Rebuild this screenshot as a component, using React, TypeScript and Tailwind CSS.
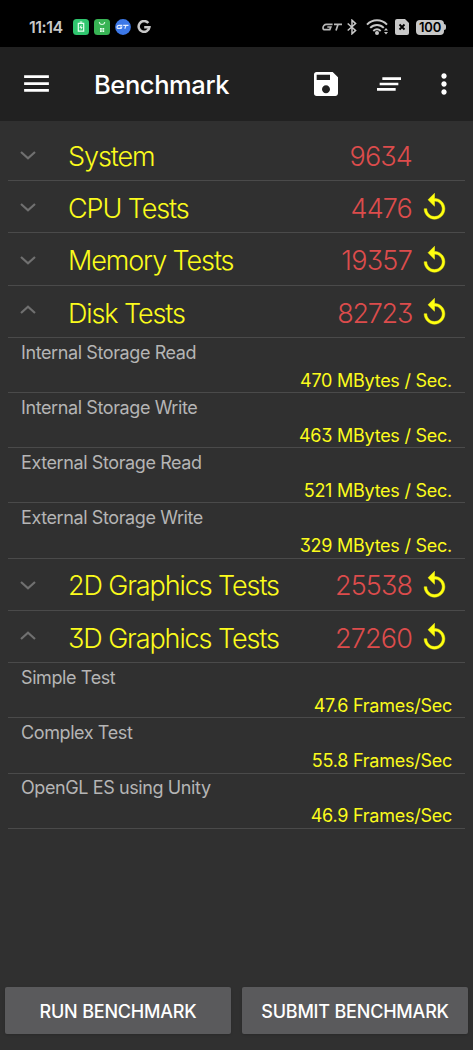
import React from "react";
import { MdClearAll, MdMenu, MdMoreVert, MdSave } from "react-icons/md";

const groups = [
  { name: "System", score: "9634", retry: false, open: false, tracking: -0.85, items: [] },
  { name: "CPU Tests", score: "4476", retry: true, open: false, tracking: -0.85, items: [] },
  { name: "Memory Tests", score: "19357", retry: true, open: false, tracking: -0.75, items: [] },
  {
    name: "Disk Tests",
    score: "82723",
    retry: true,
    open: true,
    tracking: -1.3,
    items: [
      { label: "Internal Storage Read", value: "470 MBytes / Sec." },
      { label: "Internal Storage Write", value: "463 MBytes / Sec." },
      { label: "External Storage Read", value: "521 MBytes / Sec." },
      { label: "External Storage Write", value: "329 MBytes / Sec." },
    ],
  },
  { name: "2D Graphics Tests", score: "25538", retry: true, open: false, tracking: -0.9, items: [] },
  {
    name: "3D Graphics Tests",
    score: "27260",
    retry: true,
    open: true,
    tracking: -0.85,
    items: [
      { label: "Simple Test", value: "47.6 Frames/Sec" },
      { label: "Complex Test", value: "55.8 Frames/Sec" },
      { label: "OpenGL ES using Unity", value: "46.9 Frames/Sec" },
    ],
  },
];

const Chevron = ({ open }: { open: boolean }) => (
  <svg
    viewBox="0 0 16 9"
    className={open ? "w-4 h-[9px] mb-[3px]" : "w-4 h-[9px] mt-[2px] rotate-180"}
    fill="none"
    stroke="#707070"
    strokeWidth="2.2"
  >
    <path d="M1 8 8 1.8 15 8" />
  </svg>
);

const Replay = () => (
  <svg viewBox="0 0 24 24" className="w-[31px] h-[31px]" fill="#ffff10" stroke="#ffff10" strokeWidth="0.4">
    <path d="M12 5V1L7 6l5 5V7c3.310 0 6 2.690 6 6s-2.690 6-6 6-6-2.690-6-6H4c0 4.420 3.580 8 8 8s8-3.580 8-8-3.580-8-8-8z" />
  </svg>
);

const StatusBar = () => (
  <div className="h-[47px] bg-black flex items-center pt-[7px] pl-[29px] pr-[27px] text-[#c8c8c8]">
    <span className="w-[44px] text-[16px] font-semibold tracking-[-0.5px] whitespace-nowrap">11:14</span>
    {/* Battery app */}
    <svg viewBox="0 0 16 16" className="w-4 h-4">
      <rect width="16" height="16" rx="3.5" fill="#2fc56e" />
      <path d="M6.7 3h2.6M5.3 4.4h5.4v7.8H5.3z" fill="none" stroke="#e9fff1" strokeWidth="1.2" />
      <path d="M8.5 5.6 6.4 8.8h1.4v2.2l1.9-3.1H8.3z" fill="#e9fff1" />
    </svg>
    {/* Shopping app */}
    <svg viewBox="0 0 16 16" className="w-4 h-4 ml-[5px]">
      <rect width="16" height="16" rx="3.5" fill="#38b354" />
      <path d="M5.3 3c.2 3.4 5.2 3.4 5.4 0" fill="none" stroke="#d9f7df" strokeWidth="1.1" />
      <path d="M6 9h1.8v1.8H6zM8.4 9h1.8v1.8H8.4zM6 11.3h1.8V13H6zM8.4 11.3h1.8V13H8.4z" fill="#e9fff1" />
    </svg>
    {/* GT mode */}
    <svg viewBox="0 0 16 16" className="w-4 h-4 ml-[5px]">
      <circle cx="8" cy="8" r="7.9" fill="#3c78e8" />
      <path
        d="M7.3 6.4H4.2C2.9 6.4 2 7.5 2 8.4c0 .7.6 1 1.4 1h2.8L6.8 8H5M8.2 6.4h5.3M11 6.4 9.8 9.7"
        fill="none"
        stroke="#e6efff"
        strokeWidth="1.1"
      />
    </svg>
    {/* Google */}
    <svg viewBox="0 0 14 14" className="w-[14px] h-[14px] ml-[6px]" fill="none" stroke="#c8c8c8" strokeWidth="2.5">
      <path d="M11.3 3.1A5.4 5.4 0 1 0 12.4 7.2H7.2" />
    </svg>
    <div className="ml-auto flex items-center">
      <svg viewBox="0 0 20 8" className="w-5 h-2 mr-[5px]" fill="none" stroke="#b8b8b8" strokeWidth="1.7">
        <path d="M10.6 1.4H4.4C2.4 1.4 1 3.2 1 4.9c0 1.1.8 1.7 2 1.7h4.8l1-2.6H5.3M12 1.4h8M16 1.4 14 7.4" />
      </svg>
      <svg viewBox="0 0 10 16" className="w-[10px] h-4" fill="none" stroke="#c8c8c8" strokeWidth="1.5">
        <path d="M.7 4.5 8.6 11.4 5 14.8V1.2L8.6 4.6.7 11.5" />
      </svg>
      <svg viewBox="0 0 23 16" className="w-[23px] h-4 ml-[9px]" fill="none" stroke="#c8c8c8" strokeWidth="2">
        <path d="M1 5.6C6.6-.1 15.4-.1 21 5.6M4.2 8.9c3.8-3.8 9.8-3.8 13.6 0M7.3 11.9c2.2-2 5.2-2 7.4 0" />
        <circle cx="11" cy="14" r="2" fill="#c8c8c8" stroke="none" />
        <path d="m18 11.600 2-2.600 2 2.600zM18 12.900l2 2.600 2-2.600z" fill="#c8c8c8" stroke="none" />
      </svg>
      <svg viewBox="0 0 14 16" className="w-[14px] h-4 ml-[6px]">
        <path d="M2 0h8l4 4v10a2 2 0 0 1-2 2H2a2 2 0 0 1-2-2V2a2 2 0 0 1 2-2z" fill="#c8c8c8" />
        <path d="m4.5 5.5 5 5m0-5-5 5" stroke="#000" strokeWidth="1.8" />
      </svg>
      <div className="ml-[7px] w-[28px] h-[15px] rounded-[4px] bg-[#c8c8c8] text-black text-[13px] leading-none font-semibold tracking-[-0.2px] flex items-center justify-center">
        100
      </div>
      <div className="w-[2px] h-[6px] rounded-r bg-[#c8c8c8]" />
    </div>
  </div>
);

const App = () => {
  return (
    <div className="w-full h-[1050px] bg-[#303030] flex flex-col font-['Inter',sans-serif] [font-feature-settings:'cv09'] overflow-hidden">
      <StatusBar />

      {/* Toolbar */}
      <header className="h-[73.6px] bg-[#212121] flex items-center text-white pl-5 pr-[13px]">
        <MdMenu className="w-[33px] h-[33px]" />
        <h1 className="ml-[41px] pt-[3px] text-[25.5px] font-medium tracking-[-0.4px]">Benchmark</h1>
        <MdSave className="w-8 h-8 ml-auto" />
        <MdClearAll className="w-8 h-8 ml-[31px]" />
        <MdMoreVert className="w-8 h-8 ml-[23px]" />
      </header>

      {/* Results */}
      <main className="flex-1 px-2 pt-2">
        {groups.map((group) => (
          <section key={group.name}>
            <div className="h-[52.4px] border-b border-[#4a4a4a] flex items-center text-[27px] font-[350]">
              <div className="w-[60px] pl-3">
                <Chevron open={group.open} />
              </div>
              <span className="pt-[5px] text-[#fbfb1c] tracking-[-1.1px] whitespace-nowrap">{group.name}</span>
              <span className="ml-auto pt-[5px] text-[#dc4c4c]" style={{ letterSpacing: group.tracking }}>
                {group.score}
              </span>
              <div className="w-[53px] pt-[2px] pl-[7px]">{group.retry && <Replay />}</div>
            </div>
            {group.items.map((item) => (
              <div
                key={item.label}
                className="h-[55.1px] border-b border-[#4a4a4a] px-[13px] pt-[2.4px] text-[18px] leading-[24px]"
              >
                <div className="text-[#b5b5b5] tracking-[-0.4px]">{item.label}</div>
                <div className="mt-[4.6px] text-right text-[#fbfb1c] tracking-[-0.25px]">{item.value}</div>
              </div>
            ))}
          </section>
        ))}
      </main>

      {/* Actions */}
      <footer className="flex gap-[11px] px-[5px] pb-4">
        <button className="flex-1 h-[47px] pt-[2px] rounded-[2px] bg-[#5a5a5c] text-white text-[18px] font-medium tracking-[-0.2px] shadow">
          RUN BENCHMARK
        </button>
        <button className="flex-1 h-[47px] pt-[2px] rounded-[2px] bg-[#5a5a5c] text-white text-[18px] font-medium tracking-[-0.2px] shadow">
          SUBMIT BENCHMARK
        </button>
      </footer>
    </div>
  );
};

export default App;
